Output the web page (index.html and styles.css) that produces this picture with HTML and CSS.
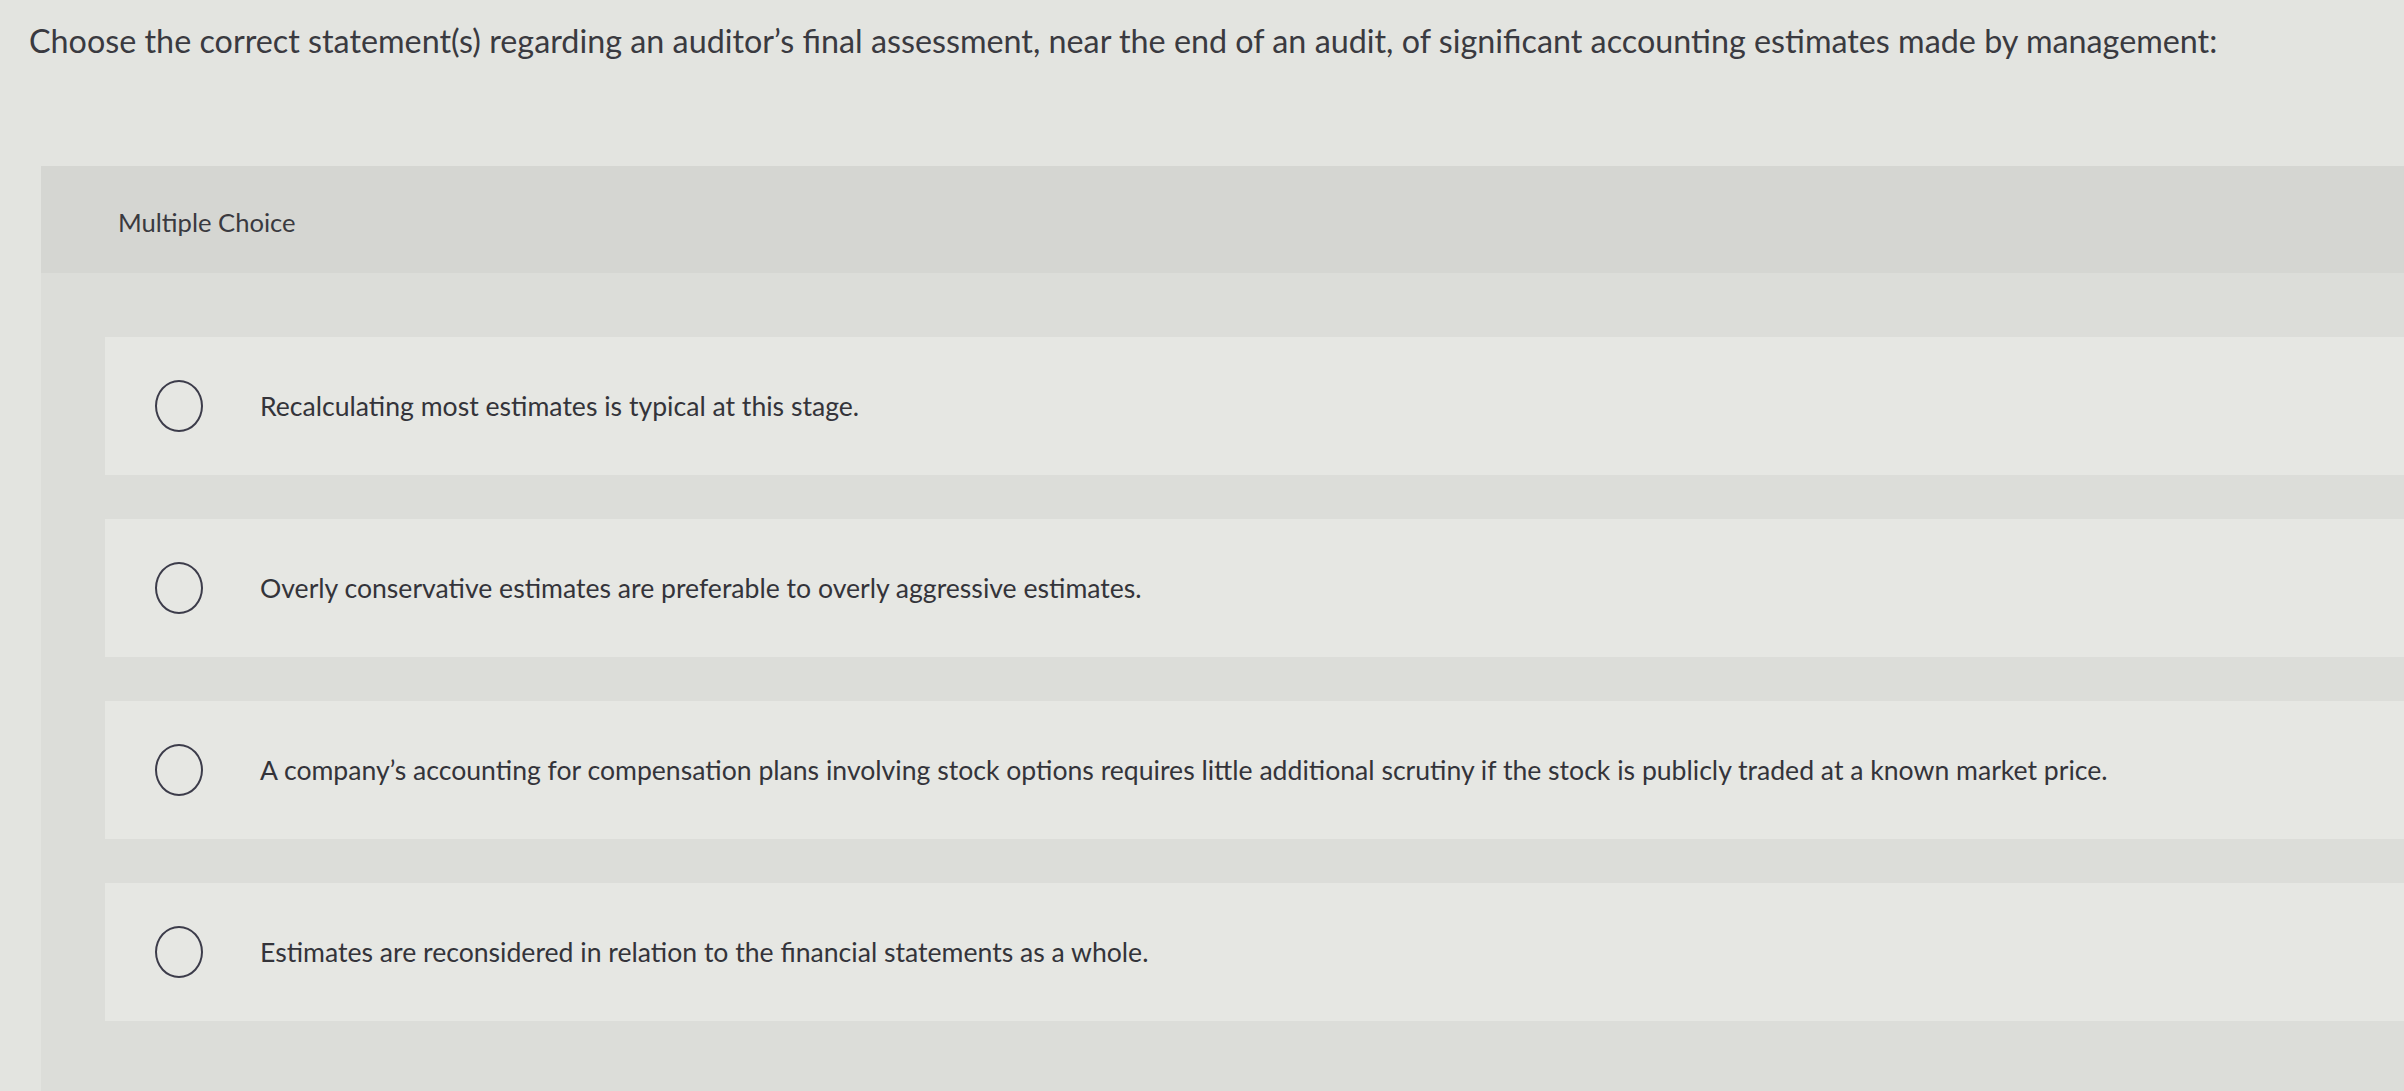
FILE: index.html
```html
<!DOCTYPE html>
<html lang="en">
<head>
<meta charset="utf-8">
<title>Multiple Choice</title>
<link rel="stylesheet" href="styles.css">
</head>
<body>
<div class="page">
  <p class="question">Choose the correct statement(s) regarding an auditor’s final assessment, near the end of an audit, of significant accounting estimates made by management:</p>
  <section class="panel">
    <header class="panel-head">Multiple Choice</header>
    <div class="options">
      <label class="option">
        <span class="radio"></span>
        <span class="opt-text">Recalculating most estimates is typical at this stage.</span>
      </label>
      <label class="option">
        <span class="radio"></span>
        <span class="opt-text">Overly conservative estimates are preferable to overly aggressive estimates.</span>
      </label>
      <label class="option">
        <span class="radio"></span>
        <span class="opt-text">A company’s accounting for compensation plans involving stock options requires little additional scrutiny if the stock is publicly traded at a known market price.</span>
      </label>
      <label class="option">
        <span class="radio"></span>
        <span class="opt-text">Estimates are reconsidered in relation to the financial statements as a whole.</span>
      </label>
    </div>
  </section>
</div>
</body>
</html>
```

FILE: styles.css
```css
html, body {
  margin: 0;
  padding: 0;
  height: 100%;
  overflow: hidden;
}
body {
  background: #e3e4e0;
  font-family: Lato, "Liberation Sans", Arial, sans-serif;
  color: #34343a;
}
.page {
  padding: 22px 0 0 29px;
}
.question {
  margin: 0;
  font-size: 32.3px;
  line-height: 38px;
  color: #3a3a40;
  white-space: nowrap;
}
.panel {
  margin: 106px -80px 0 12px;
  background: #dcddd9;
  min-height: 960px;
}
.panel-head {
  height: 107px;
  box-sizing: border-box;
  padding: 41px 0 0 77px;
  background: #d5d6d2;
  font-size: 25.6px;
  line-height: 30px;
  color: #3a3a40;
}
.options {
  display: flex;
  flex-direction: column;
  gap: 44px;
  padding: 64px 0 0 64px;
}
.option {
  display: flex;
  align-items: center;
  height: 138px;
  background: #e6e7e3;
  padding-left: 50px;
}
.radio {
  flex: none;
  width: 48px;
  height: 52px;
  box-sizing: border-box;
  border: 2.5px solid #3c3c4a;
  border-radius: 50%;
}
.opt-text {
  margin-left: 57px;
  font-size: 26.6px;
  line-height: 32px;
  color: #34343a;
  white-space: nowrap;
}
```
